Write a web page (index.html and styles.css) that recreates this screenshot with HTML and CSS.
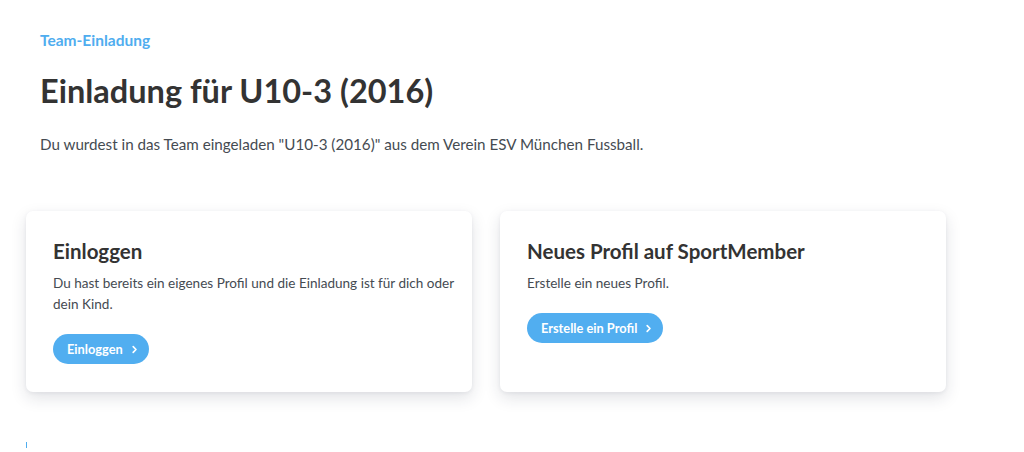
FILE: index.html
```html
<!DOCTYPE html>
<html lang="de">
<head>
<meta charset="utf-8">
<title>Team-Einladung</title>
<link rel="stylesheet" href="styles.css">
</head>
<body>
<main class="page">
  <header class="intro">
    <div class="eyebrow">Team-Einladung</div>
    <h1 class="title">Einladung für U10-3 (2016)</h1>
    <p class="lead">Du wurdest in das Team eingeladen "U10-3 (2016)" aus dem Verein ESV München Fussball.</p>
  </header>
  <section class="cards">
    <div class="card">
      <h2 class="card-title">Einloggen</h2>
      <p class="card-text">Du hast bereits ein eigenes Profil und die Einladung ist für dich oder dein Kind.</p>
      <a class="btn" href="#">Einloggen <svg class="chev" viewBox="0 0 8 10" width="7" height="9"><path d="M2.5 1.8 L5.7 5 L2.5 8.2" fill="none" stroke="#fff" stroke-width="1.9" stroke-linecap="round" stroke-linejoin="round"/></svg></a>
    </div>
    <div class="card">
      <h2 class="card-title">Neues Profil auf SportMember</h2>
      <p class="card-text">Erstelle ein neues Profil.</p>
      <a class="btn" href="#">Erstelle ein Profil <svg class="chev" viewBox="0 0 8 10" width="7" height="9"><path d="M2.5 1.8 L5.7 5 L2.5 8.2" fill="none" stroke="#fff" stroke-width="1.9" stroke-linecap="round" stroke-linejoin="round"/></svg></a>
    </div>
  </section>
  <div class="footer-line"><span class="mark"></span></div>
</main>
</body>
</html>
```
FILE: styles.css
```css
* { box-sizing: border-box; }
html, body { margin: 0; padding: 0; background: #fff; }
body {
  font-family: Lato, "Open Sans", "Liberation Sans", sans-serif;
  color: #333;
  overflow: hidden;
}
.page {
  padding: 30px 26px 0 26px;
}
.intro {
  padding-left: 14px;
}
.eyebrow {
  font-size: 15.5px;
  font-weight: 700;
  color: #4fadef;
  line-height: 20px;
}
.title {
  margin: 21px 0 0 0;
  font-size: 32.5px;
  font-weight: 700;
  line-height: 40px;
  color: #333;
}
.lead {
  margin: 22px 0 0 0;
  font-size: 15.2px;
  line-height: 22px;
  color: #454b52;
}
.cards {
  margin-top: 56px;
  display: flex;
  gap: 28px;
  align-items: stretch;
}
.card {
  width: 446px;
  background: #fff;
  border-radius: 7px;
  box-shadow: 0 6px 16px rgba(30, 35, 60, 0.13), 0 1px 4px rgba(30, 35, 60, 0.06);
  padding: 27px 12px 28px 27px;
  display: flex;
  flex-direction: column;
  align-items: flex-start;
}
.card-title {
  margin: 0;
  font-size: 20.5px;
  font-weight: 700;
  line-height: 26px;
  color: #333;
}
.card-text {
  margin: 9px 0 0 0;
  font-size: 13.55px;
  line-height: 21px;
  color: #454b52;
}
.btn {
  margin-top: 19px;
  display: inline-flex;
  align-items: center;
  gap: 8px;
  height: 30px;
  padding: 0 11px 0 14px;
  border-radius: 15px;
  background: #51aef0;
  color: #fff;
  font-size: 12.8px;
  font-weight: 700;
  text-decoration: none;
}
.chev { display: block; }
.footer-line {
  margin-top: 50px;
  height: 10px;
}
.mark {
  display: block;
  width: 1px;
  height: 6px;
  background: #4fadef;
}
```
